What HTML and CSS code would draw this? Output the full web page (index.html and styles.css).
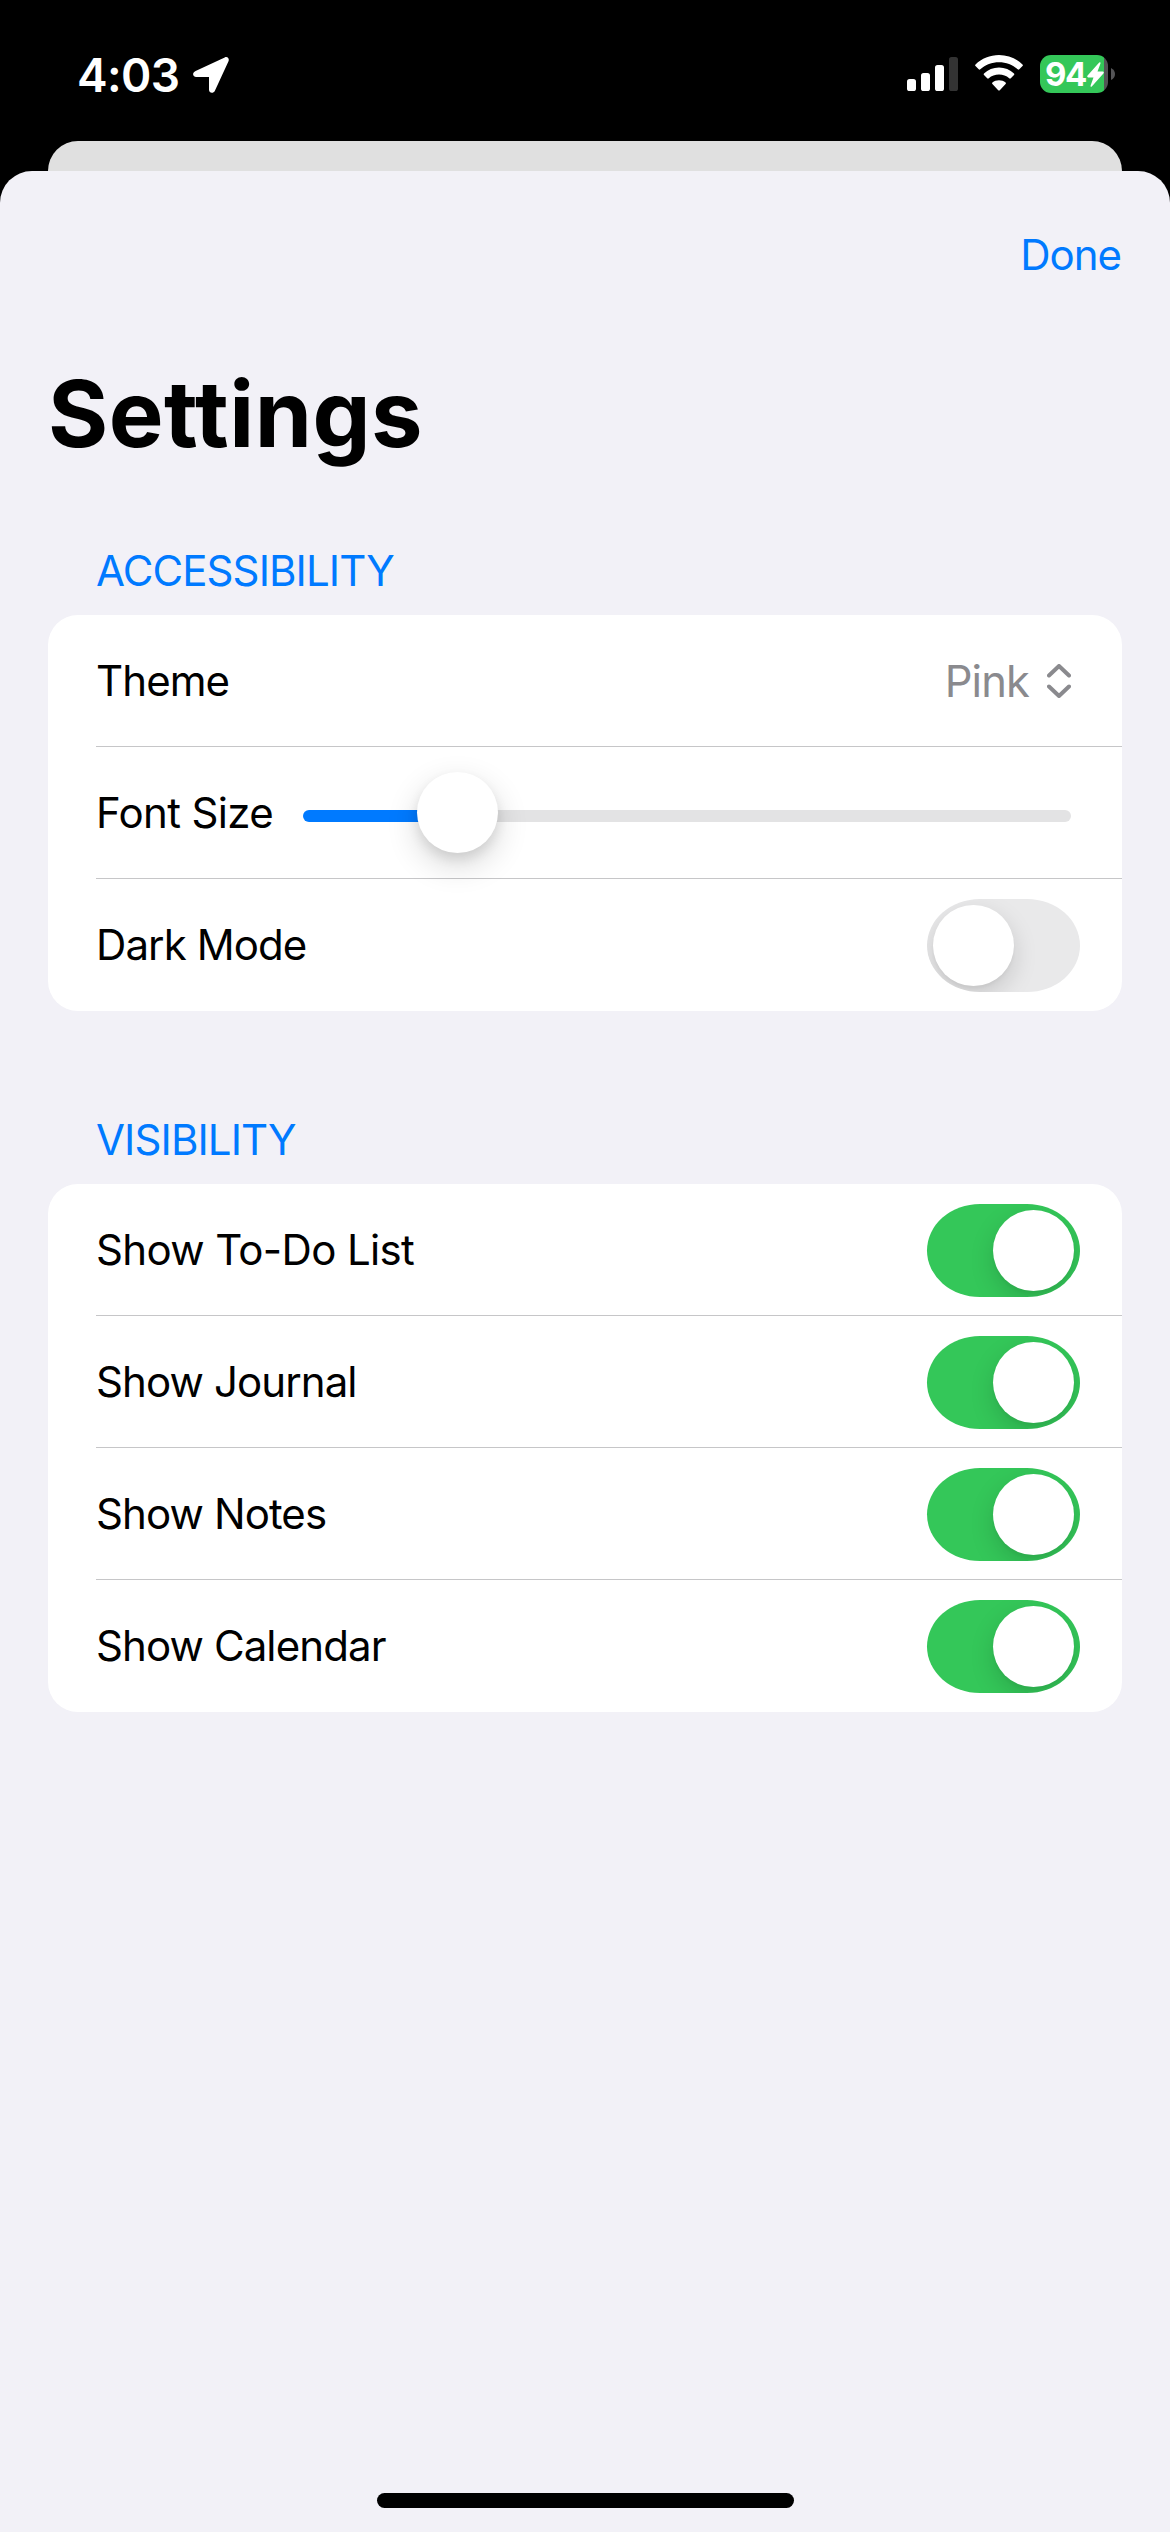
FILE: index.html
```html
<!DOCTYPE html>
<html lang="en">
<head>
<meta charset="utf-8">
<title>Settings</title>
<link rel="stylesheet" href="styles.css">
</head>
<body>
<div class="screen">
  <header class="status">
    <div class="status-left">
      <span class="time">4:03</span>
      <svg class="location" width="36" height="36" viewBox="0 0 36 36"><path d="M2.6 14.1 31.7.4C34.4-.8 36.6 1.5 35.5 4.2L21.9 33.7C20.4 36.9 16 36.3 16 32.8V20H3.2C-.5 20-1.1 15.7 2.6 14.1Z"/></svg>
    </div>
    <div class="status-right">
      <svg class="signal" width="51" height="34" viewBox="0 0 51 34">
        <rect x="0" y="22" width="9" height="12" rx="2.6"/>
        <rect x="14" y="16" width="9" height="18" rx="2.6"/>
        <rect x="28" y="8" width="9" height="26" rx="2.6"/>
        <rect class="bar-off" x="42" y="0" width="9" height="34" rx="2.6"/>
      </svg>
      <svg class="wifi" width="48" height="36" viewBox="0 0 48 36">
        <path d="M24 0C33 0 41.200 3.500 47.500 9.400Q48.300 10.200 47.500 11L44.300 14.300Q43.500 15 42.700 14.300C37.600 9.700 31 7.200 24 7.200S10.400 9.700 5.300 14.300Q4.500 15 3.700 14.300L.5 11Q-.3 10.200 .5 9.400C6.800 3.500 15 0 24 0Z"/>
        <path d="M24 12.500C29.800 12.500 35 14.700 39 18.400Q39.800 19.200 39 20L35.800 23.300Q35 24 34.200 23.300C31.400 20.900 27.900 19.600 24 19.600S16.600 20.900 13.800 23.300Q13 24 12.200 23.300L9 20Q8.200 19.200 9 18.400C13 14.700 18.200 12.500 24 12.500Z"/>
        <path d="M24 25.300C26.500 25.300 28.800 26.100 30.600 27.600Q31.400 28.300 30.600 29.100L24.800 35.200Q24 36 23.200 35.200L17.400 29.100Q16.600 28.300 17.400 27.600C19.200 26.100 21.500 25.300 24 25.300Z"/>
      </svg>
      <div class="battery">
        <div class="battery-body">
          <span class="percent">94</span>
          <svg class="bolt" width="17" height="25" viewBox="0 0 17 25"><path d="M12.200.5Q14-.3 13.400 1.700L10.500 9.600H15.800Q17.400 9.900 16.400 11.500L4.800 24.500Q3.200 25.400 3.700 23.300L6.500 15.400H1.200Q-.4 15.100 .6 13.500Z"/></svg>
        </div>
        <svg class="battery-cap" width="4" height="12" viewBox="0 0 4 12"><path d="M0 0Q4 2 4 6T0 12Z"/></svg>
      </div>
    </div>
  </header>
  <div class="back-sheet"></div>
  <main class="sheet">
    <nav class="nav"><span class="done">Done</span></nav>
    <h1 class="title">Settings</h1>
    <section class="group">
      <h2 class="heading">ACCESSIBILITY</h2>
      <div class="card">
        <div class="row">
          <span class="label">Theme</span>
          <div class="picker">
            <span class="value">Pink</span>
            <svg class="chevrons" width="24" height="34" viewBox="0 0 24 34"><path d="M2 11.500 12 2 22 11.500M2 22.500 12 32 22 22.500"/></svg>
          </div>
        </div>
        <div class="row">
          <span class="label loose">Font Size</span>
          <div class="slider"><div class="slider-fill"></div><div class="slider-rest"></div><div class="knob slider-knob"></div></div>
        </div>
        <div class="row">
          <span class="label">Dark Mode</span>
          <div class="toggle"><div class="knob"></div></div>
        </div>
      </div>
    </section>
    <section class="group">
      <h2 class="heading">VISIBILITY</h2>
      <div class="card">
        <div class="row"><span class="label loose">Show To-Do List</span><div class="toggle on"><div class="knob"></div></div></div>
        <div class="row"><span class="label">Show Journal</span><div class="toggle on"><div class="knob"></div></div></div>
        <div class="row"><span class="label">Show Notes</span><div class="toggle on"><div class="knob"></div></div></div>
        <div class="row"><span class="label">Show Calendar</span><div class="toggle on"><div class="knob"></div></div></div>
      </div>
    </section>
    <div class="home-bar"></div>
  </main>
</div>
</body>
</html>
```
FILE: styles.css
```css
* { box-sizing: border-box; }
body {
  margin: 0;
  background: #000;
  font-family: Inter, "Liberation Sans", sans-serif;
  color: #000;
}
.screen {
  width: 1170px;
  height: 2532px;
  display: flex;
  flex-direction: column;
  overflow: hidden;
}
.status {
  flex: none;
  height: 141px;
  padding: 45px 55px 0 77px;
  display: flex;
  justify-content: space-between;
  align-items: flex-start;
}
.status-left, .status-right, .battery { display: flex; }
.status-left { height: 60px; align-items: center; gap: 14px; }
.time {
  width: 102px;
  color: #fff;
  font-size: 46px;
  line-height: 59px;
  font-weight: 580;
  letter-spacing: -.6px;
  white-space: nowrap;
}
.location { fill: #fff; }
.status-right { padding-top: 10px; align-items: flex-start; }
.signal { margin: 2px 17px 0 0; fill: #fff; }
.bar-off { fill: #333; }
.wifi { margin-right: 17px; fill: #fff; }
.battery { align-items: center; gap: 3px; }
.battery-body {
  width: 68px;
  height: 38px;
  border-radius: 11px;
  padding-left: 5px;
  background: linear-gradient(90deg, #34c759 64px, #545456 64px);
  display: flex;
  align-items: center;
}
.percent {
  width: 42px;
  color: #fff;
  font-size: 33px;
  line-height: 38px;
  font-weight: 700;
  letter-spacing: -1.5px;
}
.bolt { fill: #fff; }
.battery-cap { fill: #545456; }
.back-sheet {
  flex: none;
  height: 60px;
  margin: 0 48px -30px;
  border-radius: 30px 30px 0 0;
  background: #e0e0e0;
}
.sheet {
  flex: 1;
  display: flex;
  flex-direction: column;
  padding: 0 48px 24px;
  border-radius: 32px 32px 0 0;
  background: #f2f1f7;
  z-index: 1;
}
.nav {
  height: 168px;
  padding: 54px 1px 0 0;
  display: flex;
  justify-content: flex-end;
}
.done {
  font-size: 42px;
  line-height: 60px;
  letter-spacing: -1px;
  color: #007aff;
}
.title {
  margin: 0;
  height: 150px;
  font-size: 92px;
  line-height: 149px;
  font-weight: 700;
  letter-spacing: .5px;
  font-feature-settings: "liga" 0, "calt" 0;
}
.group { margin-top: 52px; }
.group + .group { margin-top: 99px; }
.heading {
  margin: 0;
  padding: 0 0 14px 48px;
  height: 74px;
  font-size: 42px;
  line-height: 60px;
  font-weight: 400;
  letter-spacing: -.9px;
  color: #007aff;
  white-space: nowrap;
}
.card {
  border-radius: 30px;
  background: #fff;
}
.row {
  height: 132px;
  margin-left: 48px;
  padding-right: 42px;
  display: flex;
  align-items: center;
  justify-content: space-between;
}
.row + .row { box-shadow: 0 -1px #c6c6c8; }
.label {
  font-size: 42px;
  line-height: 60px;
  letter-spacing: -.9px;
  white-space: nowrap;
}
.loose { letter-spacing: -.65px; }
.picker { display: flex; align-items: center; gap: 18px; padding-right: 9px; color: #8a8a8e; }
.value { font-size: 43.5px; line-height: 60px; letter-spacing: -.9px; }
.chevrons { fill: none; stroke: #8a8a8e; stroke-width: 4; stroke-linecap: round; stroke-linejoin: round; }
.slider {
  position: relative;
  display: flex;
  width: 768px;
  height: 12px;
  margin: 6px 9px 0 0;
}
.slider-fill { width: 154px; border-radius: 6px 0 0 6px; background: #007aff; }
.slider-rest { flex: 1; border-radius: 0 6px 6px 0; background: #e3e3e4; }
.knob {
  width: 81px;
  height: 81px;
  border-radius: 50%;
  background: #fff;
  box-shadow: 0 9px 24px rgba(0, 0, 0, .15), 0 3px 3px rgba(0, 0, 0, .03);
}
.slider-knob {
  position: absolute;
  left: 114px;
  top: -38px;
  box-shadow: 0 12px 32px rgba(0, 0, 0, .16), 0 6px 12px rgba(0, 0, 0, .09);
}
.toggle {
  width: 153px;
  height: 93px;
  padding: 6px;
  margin-top: 1px;
  display: flex;
  overflow: hidden;
  border-radius: 53px / 46.5px;
  background: #e9e9ea;
}
.toggle.on { justify-content: flex-end; background: #34c759; }
.home-bar {
  width: 417px;
  height: 15px;
  margin: auto auto 0;
  border-radius: 8px;
  background: #000;
}
```
